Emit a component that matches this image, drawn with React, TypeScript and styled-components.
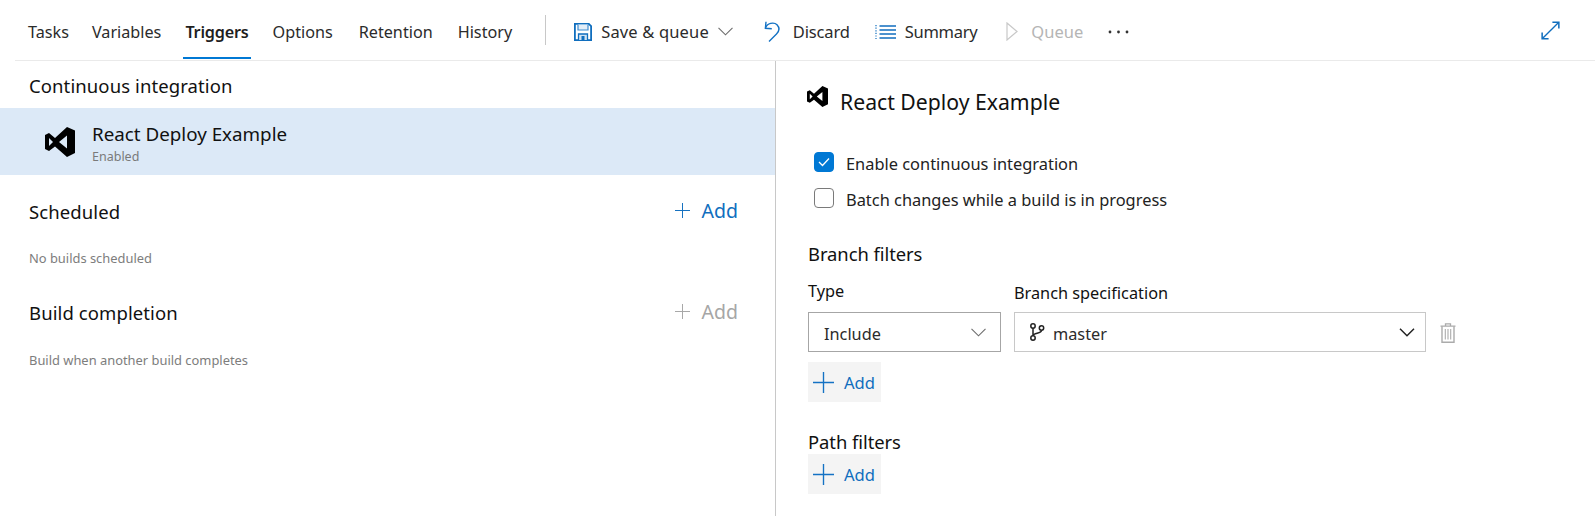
import React from "react";
import styled, { createGlobalStyle } from "styled-components";

const Global = createGlobalStyle`
  html, body { margin: 0; padding: 0; background: #fff; }
  body { font-family: "Noto Sans", "Open Sans", "Liberation Sans", sans-serif; color: #1b1b1b; }
  #root { width: 1595px; height: 516px; overflow: hidden; }
`;

const Page = styled.div`
  width: 1595px;
  height: 516px;
  display: flex;
  flex-direction: column;
`;
const Toolbar = styled.div`
  height: 60px;
  margin-left: 15px;
  border-bottom: 1px solid #eaeaea;
  display: flex;
  align-items: stretch;
  flex: none;
`;
const Tab = styled.div<{ $active?: boolean; $start: number }>`
  position: relative;
  margin-left: ${(p) => p.$start}px;
  font-size: 16.2px;
  line-height: 64px;
  color: ${(p) => (p.$active ? "#1e1e1e" : "#2b2b2b")};
  font-weight: ${(p) => (p.$active ? 600 : 400)};
  letter-spacing: ${(p) => (p.$active ? "-0.2px" : "0")};
  &::after {
    content: "";
    display: ${(p) => (p.$active ? "block" : "none")};
    position: absolute;
    left: -2px;
    right: -2px;
    top: 57px;
    height: 2px;
    background: #0078d4;
  }
`;
const Separator = styled.div`
  width: 1px;
  height: 30px;
  margin: 15px 0 0 33px;
  background: #c8c8c8;
`;
const Action = styled.div<{ $gap: number; $start: number; $disabled?: boolean }>`
  display: flex;
  align-items: center;
  gap: ${(p) => p.$gap}px;
  margin-left: ${(p) => p.$start}px;
  font-size: 16.5px;
  color: ${(p) => (p.$disabled ? "#b5b5b5" : "#2b2b2b")};
  padding-top: 3px;
`;
const ActionLabel = styled.span<{ $spacing?: number }>`
  letter-spacing: ${(p) => p.$spacing ?? 0}px;
`;
const Spacer = styled.div`
  flex: 1;
`;
const Expand = styled.div`
  display: flex;
  align-items: center;
  margin-right: 35px;
  padding-top: 1px;
`;
const Body = styled.div`
  flex: 1;
  display: flex;
  min-height: 0;
`;
const Left = styled.div`
  width: 775px;
  flex: none;
  border-right: 1px solid #c8c8c8;
`;
const SectionTitle = styled.div`
  font-size: 18.5px;
  letter-spacing: 0.1px;
  line-height: 24px;
  color: #111;
`;
const CiHeader = styled(SectionTitle)`
  padding: 13px 0 0 29px;
  height: 47px;
  box-sizing: border-box;
`;
const DefRow = styled.div`
  height: 67px;
  background: #dce9f7;
  display: flex;
  align-items: center;
  padding-left: 45px;
  gap: 17px;
`;
const DefText = styled.div`
  display: flex;
  flex-direction: column;
  margin-top: 6px;
`;
const DefName = styled.div`
  font-size: 18.8px;
  line-height: 24px;
  color: #111;
`;
const DefState = styled.div`
  font-size: 12.5px;
  line-height: 20px;
  margin-top: 1px;
  color: #7a7a7a;
`;
const TriggerHead = styled.div<{ $top: number }>`
  display: flex;
  justify-content: space-between;
  align-items: center;
  margin-top: ${(p) => p.$top}px;
  padding: 0 37px 0 29px;
  height: 26px;
`;
const AddLink = styled.div<{ $muted?: boolean }>`
  display: flex;
  align-items: center;
  gap: 12px;
  font-size: 19.5px;
  color: ${(p) => (p.$muted ? "#a6a6a6" : "#106ebe")};
  margin-top: -3px;
`;
const Note = styled.div<{ $top: number }>`
  margin-top: ${(p) => p.$top}px;
  padding-left: 29px;
  font-size: 12.9px;
  line-height: 18px;
  color: #7d7d7d;
`;
const Right = styled.div`
  flex: 1;
  padding-left: 32px;
  display: flex;
  flex-direction: column;
  align-items: flex-start;
`;
const DetailHead = styled.div`
  display: flex;
  align-items: flex-start;
  gap: 12px;
  margin-top: 25px;
  margin-left: -1px;
  height: 33px;
`;
const DetailTitle = styled.div`
  font-size: 21.2px;
  line-height: 32px;
  color: #111;
`;
const CheckRow = styled.div<{ $top: number }>`
  display: flex;
  align-items: center;
  gap: 12px;
  margin: ${(p) => p.$top}px 0 0 6px;
  height: 20px;
`;
const Box = styled.div<{ $on?: boolean }>`
  width: 20px;
  height: 20px;
  box-sizing: border-box;
  border-radius: 4px;
  border: 1px solid ${(p) => (p.$on ? "#0078d4" : "#7a7a7a")};
  background: ${(p) => (p.$on ? "#0078d4" : "#fff")};
  display: flex;
  align-items: center;
  justify-content: center;
`;
const CheckLabel = styled.div`
  font-size: 16.4px;
  color: #222;
  padding-top: 2px;
`;
const GroupTitle = styled.div<{ $top: number }>`
  margin-top: ${(p) => p.$top}px;
  font-size: 18.4px;
  letter-spacing: -0.05px;
  line-height: 24px;
  color: #111;
`;
const FilterRow = styled.div`
  display: flex;
  gap: 13px;
  align-items: flex-end;
  margin-top: 14px;
`;
const Field = styled.div<{ $w: number }>`
  width: ${(p) => p.$w}px;
`;
const FieldLabel = styled.div<{ $y: number }>`
  font-size: 16.3px;
  line-height: 22px;
  margin-bottom: ${(p) => p.$y}px;
  color: #111;
`;
const Select = styled.div<{ $dark?: boolean; $endPad: number; $gap: number }>`
  height: 40px;
  box-sizing: border-box;
  border: 1px solid ${(p) => (p.$dark ? "#a6a6a6" : "#c8c8c8")};
  display: flex;
  align-items: center;
  padding: 0 ${(p) => p.$endPad}px 0 15px;
  gap: ${(p) => p.$gap}px;
  font-size: 16.3px;
  color: #2b2b2b;
`;
const SelectText = styled.div`
  flex: 1;
  padding-top: 3px;
`;
const Trash = styled.div`
  width: 18px;
  height: 40px;
  margin-left: 1px;
  padding-top: 2px;
  box-sizing: border-box;
  display: flex;
  align-items: center;
`;
const AddButton = styled.div<{ $top: number }>`
  margin-top: ${(p) => p.$top}px;
  width: 73px;
  height: 40px;
  background: #f4f4f4;
  display: flex;
  align-items: center;
  padding-left: 5px;
  gap: 10px;
  box-sizing: border-box;
  font-size: 16.6px;
  color: #106ebe;
`;

const VsLogo = ({ size }: { size: number }) => (
  <svg width={size} height={size} viewBox="0 0 30 30" style={{ flex: "none" }}>
    <path
      fillRule="evenodd"
      fill="#000"
      d="M22 0 L30 3.5 V26 L22 30 L10 19.5 L4 24 L0 22 V8 L4 6 L10 11 Z M4 11 V19 L8 15 Z M22 8.5 L14 15 L22 21.5 Z"
    />
  </svg>
);
const Plus = ({ size, color, weight = 1.3 }: { size: number; color: string; weight?: number }) => (
  <svg width={size} height={size} viewBox="0 0 20 20">
    <path d="M10 0V20M0 10H20" stroke={color} strokeWidth={weight} fill="none" />
  </svg>
);
const Chevron = ({ color, w = 15, weight = 1.1 }: { color: string; w?: number; weight?: number }) => (
  <svg width={w} height="9" viewBox="0 0 15 9" style={{ flex: "none" }}>
    <path d="M0.5 0.8 L7.5 7.8 L14.5 0.8" stroke={color} strokeWidth={weight} fill="none" />
  </svg>
);

export default function App() {
  return (
    <Page>
      <Global />
      <Toolbar>
        <Tab $start={13}>Tasks</Tab>
        <Tab $start={23}>Variables</Tab>
        <Tab $start={24} $active>Triggers</Tab>
        <Tab $start={24}>Options</Tab>
        <Tab $start={26}>Retention</Tab>
        <Tab $start={25}>History</Tab>
        <Separator />
        <Action $start={28} $gap={9}>
          <svg width="18" height="18" viewBox="0 0 18 18">
            <path d="M0.9 0.9H14.8L17.1 3.2V17.1H0.9Z" fill="#fff" stroke="#106ebe" strokeWidth="1.8" />
            <path d="M4 1.5V7H14V1.5" fill="#e3eef8" stroke="#3d8bcf" strokeWidth="1.2" />
            <path d="M4.5 17V11H13.5V17" fill="#cfe2f3" stroke="#106ebe" strokeWidth="1.3" />
            <path d="M7.5 13H10.5V17H7.5Z" fill="#106ebe" />
          </svg>
          <ActionLabel $spacing={0.15}>Save &amp; queue</ActionLabel>
          <Chevron color="#6d6d6d" />
        </Action>
        <Action $start={31} $gap={13}>
          <svg width="16" height="21" viewBox="0 0 16 21">
            <path d="M1.5 7 C3 2 10 0.8 13 3.8 C16 7 15 10.5 12.5 13 L5 20.5" fill="none" stroke="#1472c4" strokeWidth="1.4" />
            <path d="M2 0.8 L1.4 7.3 L7.8 7.8" fill="none" stroke="#1472c4" strokeWidth="1.4" />
          </svg>
          <ActionLabel $spacing={-0.15}>Discard</ActionLabel>
        </Action>
        <Action $start={25} $gap={9}>
          <svg width="21" height="14" viewBox="0 0 21 14">
            <path d="M4.5 1H21M4.5 5H21M4.5 9H21M4.5 13H21" stroke="#106ebe" strokeWidth="1.5" />
            <path d="M1 0V14" stroke="#106ebe" strokeWidth="1.2" strokeDasharray="1.2 1.4" />
          </svg>
          <ActionLabel $spacing={-0.3}>Summary</ActionLabel>
        </Action>
        <Action $start={29} $gap={13} $disabled>
          <svg width="12" height="19" viewBox="0 0 12 19">
            <path d="M1 1 L11 9.5 L1 18 Z" fill="none" stroke="#c8c8c8" strokeWidth="1.2" />
          </svg>
          <span>Queue</span>
        </Action>
        <Action $start={25} $gap={0}>
          <svg width="21" height="4" viewBox="0 0 21 4">
            <circle cx="2" cy="2" r="1.4" fill="#333" />
            <circle cx="10.5" cy="2" r="1.4" fill="#333" />
            <circle cx="19" cy="2" r="1.4" fill="#333" />
          </svg>
        </Action>
        <Spacer />
        <Expand>
          <svg width="19" height="19" viewBox="0 0 20 20">
            <path d="M1.5 18.5 L18.5 1.5" stroke="#106ebe" strokeWidth="1.4" />
            <path d="M12 1.2H18.8V8M1.2 12V18.8H8" fill="none" stroke="#106ebe" strokeWidth="1.6" />
          </svg>
        </Expand>
      </Toolbar>
      <Body>
        <Left>
          <CiHeader>Continuous integration</CiHeader>
          <DefRow>
            <VsLogo size={30} />
            <DefText>
              <DefName>React Deploy Example</DefName>
              <DefState>Enabled</DefState>
            </DefText>
          </DefRow>
          <TriggerHead $top={24}>
            <SectionTitle>Scheduled</SectionTitle>
            <AddLink>
              <Plus size={15} color="#106ebe" />
              Add
            </AddLink>
          </TriggerHead>
          <Note $top={24}>No builds scheduled</Note>
          <TriggerHead $top={33}>
            <SectionTitle>Build completion</SectionTitle>
            <AddLink $muted>
              <Plus size={15} color="#a6a6a6" />
              Add
            </AddLink>
          </TriggerHead>
          <Note $top={25}>Build when another build completes</Note>
        </Left>
        <Right>
          <DetailHead>
            <VsLogo size={21} />
            <DetailTitle>React Deploy Example</DetailTitle>
          </DetailHead>
          <CheckRow $top={33}>
            <Box $on>
              <svg width="12" height="10" viewBox="0 0 12 10">
                <path d="M1 5 L4.5 8.5 L11 1.5" stroke="#fff" strokeWidth="1.3" fill="none" />
              </svg>
            </Box>
            <CheckLabel>Enable continuous integration</CheckLabel>
          </CheckRow>
          <CheckRow $top={16}>
            <Box />
            <CheckLabel>Batch changes while a build is in progress</CheckLabel>
          </CheckRow>
          <GroupTitle $top={34}>Branch filters</GroupTitle>
          <FilterRow>
            <Field $w={193}>
              <FieldLabel $y={10}>Type</FieldLabel>
              <Select $dark $endPad={14} $gap={10}>
                <SelectText>Include</SelectText>
                <Chevron color="#6d6d6d" />
              </Select>
            </Field>
            <Field $w={412}>
              <FieldLabel $y={8}>Branch specification</FieldLabel>
              <Select $endPad={10} $gap={8}>
                <svg width="15" height="18" viewBox="0 0 15 18" style={{ flex: "none" }}>
                  <circle cx="3" cy="3" r="2.2" fill="none" stroke="#222" strokeWidth="1.5" />
                  <circle cx="3" cy="15" r="2.2" fill="none" stroke="#222" strokeWidth="1.5" />
                  <circle cx="11.5" cy="5" r="2.2" fill="none" stroke="#222" strokeWidth="1.5" />
                  <path d="M3 5.2V12.8M3 12.5 C4 9.5 11.5 11 11.5 7.2" fill="none" stroke="#222" strokeWidth="1.5" />
                </svg>
                <SelectText>master</SelectText>
                <Chevron color="#222" w={16} weight={1.5} />
              </Select>
            </Field>
            <Trash>
              <svg width="16" height="20" viewBox="0 0 16 20">
                <path d="M0.5 3.2H15.5M5.5 3.2V0.8H10.5V3.2" fill="none" stroke="#ababab" strokeWidth="1.3" />
                <path d="M2 3.2V19.2H14V3.2" fill="none" stroke="#ababab" strokeWidth="1.4" />
                <path d="M5.3 6V16.5M8 6V16.5M10.7 6V16.5" stroke="#ababab" strokeWidth="1.1" />
              </svg>
            </Trash>
          </FilterRow>
          <AddButton $top={10}>
            <Plus size={21} color="#1472c4" />
            Add
          </AddButton>
          <GroupTitle $top={28}>Path filters</GroupTitle>
          <AddButton $top={0}>
            <Plus size={21} color="#1472c4" />
            Add
          </AddButton>
        </Right>
      </Body>
    </Page>
  );
}
